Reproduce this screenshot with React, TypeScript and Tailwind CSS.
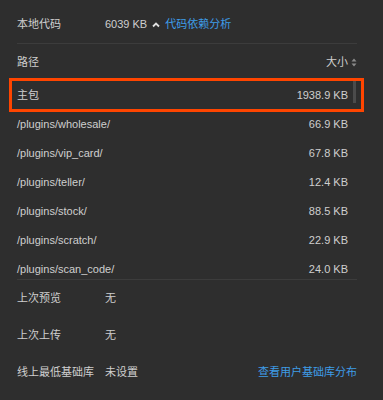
const rows = [
  { path: "主包", size: "1938.9 KB" },
  { path: "/plugins/wholesale/", size: "66.9 KB" },
  { path: "/plugins/vip_card/", size: "67.8 KB" },
  { path: "/plugins/teller/", size: "12.4 KB" },
  { path: "/plugins/stock/", size: "88.5 KB" },
  { path: "/plugins/scratch/", size: "22.9 KB" },
  { path: "/plugins/scan_code/", size: "24.0 KB" },
];

const info = [
  { label: "上次预览", value: "无" },
  { label: "上次上传", value: "无" },
  { label: "线上最低基础库", value: "未设置", link: "查看用户基础库分布" },
];

const SortIcon = () => (
  <svg width="6" height="9" viewBox="0 0 6 9" className="ml-[3px]">
    <path d="M3 0.5 L5.5 3.5 L0.5 3.5 Z" fill="#8a8a8a" />
    <path d="M3 8.5 L5.5 5.5 L0.5 5.5 Z" fill="#8a8a8a" />
  </svg>
);

const App = () => {
  return (
    <div
      className="w-[383px] h-[400px] bg-[#2e2e2e] text-[#cfcfcf] text-[11px] pl-[17px] pr-[26px] overflow-hidden"
      style={{ fontFamily: '"Liberation Sans", "Noto Sans CJK SC", sans-serif' }}
    >
      <div className="h-[43px] pt-[6px] flex items-center">
        <span className="w-[88px]">本地代码</span>
        <span>6039 KB</span>
        <svg width="8" height="6" viewBox="0 0 8 6" className="ml-[5px] mr-[5px]">
          <path d="M1 4.5 L4 1.5 L7 4.5" stroke="#e0e0e0" strokeWidth="1.8" fill="none" />
        </svg>
        <span className="text-[#3e9de8]">代码依赖分析</span>
      </div>
      <div className="h-px bg-[#3c3c3c]" />
      <div className="h-[37px] flex items-center justify-between">
        <span>路径</span>
        <span className="flex items-center">
          大小
          <SortIcon />
        </span>
      </div>
      <div className="relative h-[198px]">
        {rows.map((r) => (
          <div key={r.path} className="h-[29px] flex items-center justify-between pr-[9px]">
            <span>{r.path}</span>
            <span>{r.size}</span>
          </div>
        ))}
        <div className="absolute left-[-8px] right-[-7px] top-[-3px] h-[34px] border-[3px] border-[#ff4500]" />
        <div className="absolute right-[1px] top-0 w-[3px] h-[22px] bg-[#4b4b4b]" />
      </div>
      <div className="h-px bg-[#3c3c3c]" />
      {info.map((i) => (
        <div key={i.label} className="h-[37px] flex items-center">
          <span className="w-[88px]">{i.label}</span>
          <span className="flex-1">{i.value}</span>
          {i.link && <span className="text-[#3e9de8]">{i.link}</span>}
        </div>
      ))}
    </div>
  );
};

export default App;
